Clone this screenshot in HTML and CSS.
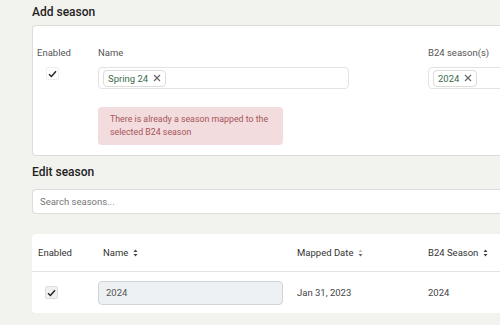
FILE: index.html
```html
<!DOCTYPE html>
<html lang="en">
<head>
    <meta charset="UTF-8">
    <title>Seasons</title>
    <link rel="stylesheet" href="styles.css">
</head>
<body>
    <h2 class="section-title">Add season</h2>
    <div class="card form-card">
        <div class="form-row">
            <div class="field field-enabled">
                <label>Enabled</label>
                <span class="check"><svg width="9" height="8" viewBox="0 0 9 8"><path d="M1 4.2 L3.4 6.5 L8 1.2" fill="none" stroke="#222" stroke-width="1.4"/></svg></span>
            </div>
            <div class="field field-name">
                <label>Name</label>
                <div class="tag-input">
                    <span class="tag">Spring 24 <svg class="x" width="8" height="8" viewBox="0 0 8 8"><path d="M1 1 L7 7 M7 1 L1 7" stroke="#666" stroke-width="1.2"/></svg></span>
                </div>
                <div class="error">There is already a season mapped to the selected B24 season</div>
            </div>
            <div class="field field-b24">
                <label>B24 season(s)</label>
                <div class="tag-input">
                    <span class="tag">2024 <svg class="x" width="8" height="8" viewBox="0 0 8 8"><path d="M1 1 L7 7 M7 1 L1 7" stroke="#666" stroke-width="1.2"/></svg></span>
                </div>
            </div>
        </div>
    </div>

    <h2 class="section-title edit-title">Edit season</h2>
    <input class="search" type="text" placeholder="Search seasons...">

    <div class="card table-card">
        <table>
            <thead>
                <tr>
                    <th class="col-enabled">Enabled</th>
                    <th class="col-name"><span class="pad">Name</span><svg class="sort" width="5" height="8" viewBox="0 0 5 8"><path d="M2.5 0.5 L4.5 3 L0.5 3 Z M2.5 7.5 L4.5 5 L0.5 5 Z" fill="#444"/></svg></th>
                    <th class="col-date">Mapped Date<svg class="sort" width="5" height="8" viewBox="0 0 5 8"><path d="M2.5 0.5 L4.5 3 L0.5 3 Z" fill="#bbb"/><path d="M2.5 7.5 L4.5 5 L0.5 5 Z" fill="#666"/></svg></th>
                    <th class="col-b24">B24 Season<svg class="sort" width="5" height="8" viewBox="0 0 5 8"><path d="M2.5 0.5 L4.5 3 L0.5 3 Z M2.5 7.5 L4.5 5 L0.5 5 Z" fill="#444"/></svg></th>
                </tr>
            </thead>
            <tbody>
                <tr>
                    <td class="col-enabled"><span class="check check-sm"><svg width="9" height="8" viewBox="0 0 9 8"><path d="M1 4.2 L3.4 6.5 L8 1.2" fill="none" stroke="#222" stroke-width="1.4"/></svg></span></td>
                    <td class="col-name"><input class="name-input" type="text" value="2024" disabled></td>
                    <td class="col-date">Jan 31, 2023</td>
                    <td class="col-b24">2024</td>
                </tr>
            </tbody>
        </table>
    </div>
</body>
</html>
```

FILE: styles.css
```css
body {
    margin: 0;
    padding: 0 0 0 32px;
    width: 520px;
    background: #f2f2ee;
    font-family: Roboto, "Noto Sans", sans-serif;
    color: #333;
    overflow: hidden;
}
.section-title {
    margin: 0;
    padding-top: 5px;
    height: 20px;
    font-size: 12px;
    font-weight: 500;
    color: #222;
}
.card {
    background: white;
    border: 1px solid #dcdcd8;
    border-right: none;
    border-radius: 4px;
    overflow: hidden;
}
.form-card {
    height: 131px;
    box-sizing: border-box;
    padding: 21px 0 0 4px;
}
.form-row {
    display: flex;
}
.field {
    flex-shrink: 0;
}
.field label {
    display: block;
    font-size: 9.5px;
    color: #555;
    height: 12px;
    line-height: 12px;
    margin-bottom: 8px;
}
.field-enabled {
    width: 61px;
}
.check {
    display: flex;
    align-items: center;
    justify-content: center;
    width: 11px;
    height: 11px;
    margin: 4px 0 0 9px;
    border: 1px solid #eee;
    border-radius: 2px;
}
.field-name {
    width: 251px;
    margin-right: 79px;
}
.field-b24 {
    width: 200px;
}
.tag-input {
    height: 20px;
    border: 1px solid #e3e3e0;
    border-radius: 4px;
    display: flex;
    align-items: center;
    padding-left: 4px;
}
.tag {
    display: inline-flex;
    align-items: center;
    height: 15px;
    padding: 0 4px;
    border: 1px solid #dcdcd8;
    border-radius: 4px;
    font-size: 9.5px;
    color: #3b6b4c;
}
.tag .x {
    margin-left: 5px;
}
.error {
    margin-top: 18px;
    width: 161px;
    padding: 6px 12px;
    background: #f3dcdd;
    border-radius: 4px;
    font-size: 8.8px;
    line-height: 13px;
    color: #a6545b;
}
.edit-title {
    margin-top: 5px;
    padding-top: 4px;
    height: 24px;
}
.search {
    display: block;
    box-sizing: border-box;
    width: 490px;
    height: 25px;
    border: 1px solid #dcdcd8;
    border-right: none;
    border-radius: 4px;
    padding: 0 7px;
    font-family: Roboto, "Noto Sans", sans-serif;
    font-size: 9.5px;
    outline: none;
}
.search::placeholder {
    color: #777;
}
.table-card {
    margin-top: 20px;
    border: none;
    height: 79px;
}
table {
    border-collapse: collapse;
    table-layout: fixed;
    width: 496px;
    font-size: 9.5px;
}
th {
    text-align: left;
    font-weight: 400;
    color: #333;
    height: 37px;
    border-bottom: 1px solid #e3e4e6;
    padding: 0;
}
td {
    padding: 0;
    height: 41px;
    color: #444;
}
.col-enabled {
    width: 60px;
    padding-left: 6px;
}
.col-name {
    width: 199px;
}
.col-name .pad {
    padding-left: 5px;
}
.col-date {
    width: 131px;
}
.col-b24 {
    width: 100px;
}
.sort {
    margin-left: 5px;
    vertical-align: -1px;
}
.check-sm {
    margin: 0 0 0 7px;
    background: #f1f1f1;
    border: 1px solid #ddd;
}
.name-input {
    box-sizing: border-box;
    width: 185px;
    height: 24px;
    background: #eef1f3;
    border: 1px solid #cfd4d8;
    border-radius: 4px;
    padding: 0 7px;
    font-family: Roboto, "Noto Sans", sans-serif;
    font-size: 9.5px;
    color: #555;
}
```
